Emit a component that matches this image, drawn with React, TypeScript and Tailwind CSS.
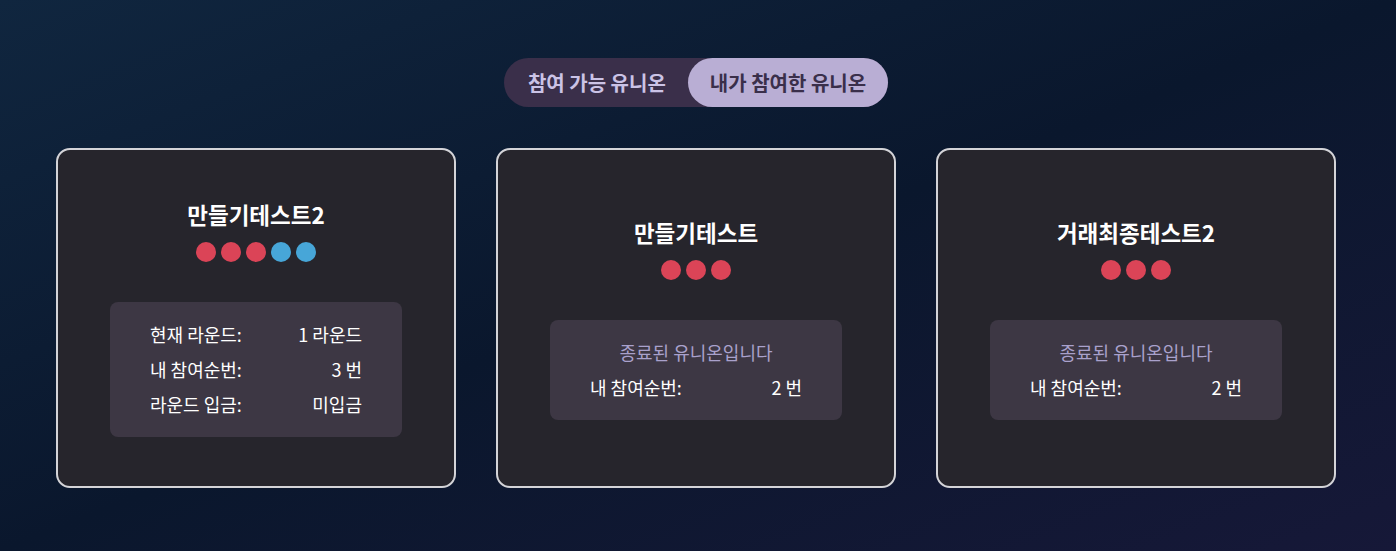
const font = { fontFamily: '"Noto Sans CJK KR", "Noto Sans", sans-serif' };

type Union = {
  name: string;
  dots: ("red" | "blue")[];
  ended: boolean;
  rows: [string, string][];
};

const unions: Union[] = [
  {
    name: "만들기테스트2",
    dots: ["red", "red", "red", "blue", "blue"],
    ended: false,
    rows: [
      ["현재 라운드:", "1 라운드"],
      ["내 참여순번:", "3 번"],
      ["라운드 입금:", "미입금"],
    ],
  },
  {
    name: "만들기테스트",
    dots: ["red", "red", "red"],
    ended: true,
    rows: [["내 참여순번:", "2 번"]],
  },
  {
    name: "거래최종테스트2",
    dots: ["red", "red", "red"],
    ended: true,
    rows: [["내 참여순번:", "2 번"]],
  },
];

function UnionCard({ union }: { union: Union }) {
  return (
    <div className="h-[340px] rounded-[14px] border-2 border-[#d4d4d8] bg-[#26252c] flex flex-col items-center justify-center">
      <h3 className="text-white text-[22.5px] font-bold leading-[30px]">{union.name}</h3>
      <div className="mt-[13px] flex gap-[5px]">
        {union.dots.map((d, i) => (
          <span
            key={i}
            className={d === "red" ? "size-[20px] rounded-full bg-[#db4457]" : "size-[20px] rounded-full bg-[#47a6d8]"}
          />
        ))}
      </div>
      <div className="mt-[40px] w-[292px] rounded-lg bg-[#3d3744] px-10 pt-[19px] pb-[20px] flex flex-col gap-[9px]">
        {union.ended && (
          <p className="text-center text-[#a9a1cc] text-[18px] leading-[26px]">종료된 유니온입니다</p>
        )}
        {union.rows.map(([k, v]) => (
          <div key={k} className="flex justify-between text-white text-[18px] leading-[26px]">
            <span>{k}</span>
            <span>{v}</span>
          </div>
        ))}
      </div>
    </div>
  );
}

export default function App() {
  return (
    <div
      style={font}
      className="w-full h-[551px] overflow-hidden bg-gradient-to-br from-[#10263f] via-[#0a172d] to-[#161838]"
    >
      <div className="ml-[56px] w-[1280px] pt-[58px] flex flex-col items-center">
        <div className="flex items-center h-[49px] rounded-full bg-[#3a2f4a]">
          <button className="h-full pl-[24px] pr-[22px] text-[20px] font-semibold text-[#cbc3e6] rounded-full">
            참여 가능 유니온
          </button>
          <button className="h-full px-[22px] rounded-full bg-[#b9aed4] text-[20px] font-semibold text-[#3a2f4a]">
            내가 참여한 유니온
          </button>
        </div>
        <div className="mt-[41px] w-full grid grid-cols-3 gap-10">
          {unions.map((u) => (
            <UnionCard key={u.name} union={u} />
          ))}
        </div>
      </div>
    </div>
  );
}
